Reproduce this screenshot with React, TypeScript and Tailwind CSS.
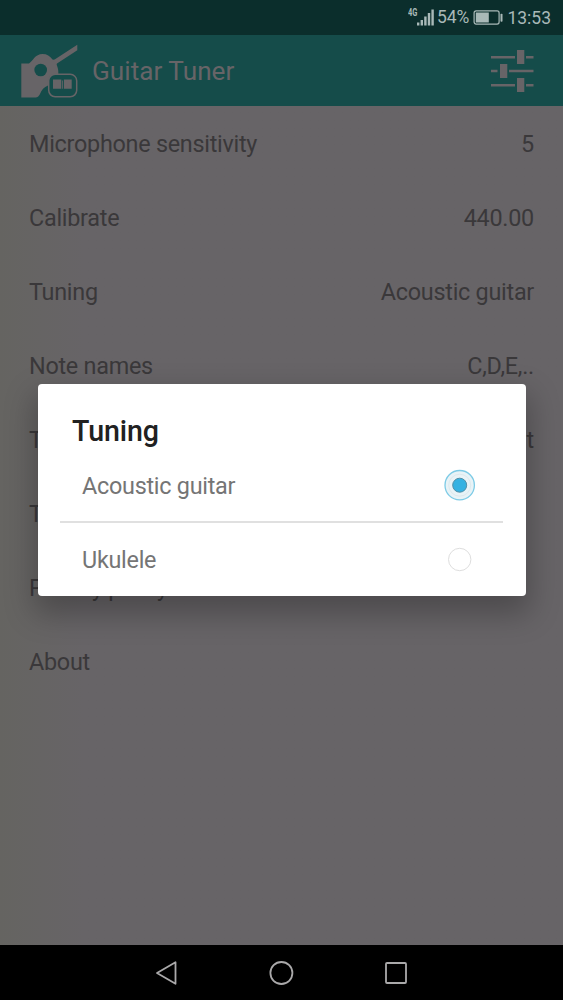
interface Setting {
  label: string
  value?: string
}

const SETTINGS: Setting[] = [
  { label: 'Microphone sensitivity', value: '5' },
  { label: 'Calibrate', value: '440.00' },
  { label: 'Tuning', value: 'Acoustic guitar' },
  { label: 'Note names', value: 'C,D,E,..' },
  { label: 'Theme', value: 'Light' },
  { label: 'Tutorial' },
  { label: 'Privacy policy' },
  { label: 'About' },
]

function StatusBar() {
  return (
    <div className="flex h-[35px] shrink-0 items-center justify-end bg-[#0b2e2c] pr-3 text-[#a9b9b8]">
      <span className="mb-[9px] w-[9px] origin-left scale-x-75 text-[10px] leading-none font-bold">4G</span>
      <svg className="mb-px" width="17" height="17" viewBox="0 0 17 17" fill="currentColor">
        <rect x="0" y="13.500" width="2.400" height="3" />
        <rect x="3.600" y="11" width="2.400" height="5.500" />
        <rect x="7.200" y="7.500" width="2.400" height="9" />
        <rect x="10.800" y="4" width="2.400" height="12.500" />
        <rect x="14.400" y="0.500" width="2.400" height="16" />
      </svg>
      <span className="ml-[3px] text-[17.5px] leading-none">54%</span>
      <svg className="ml-[4px]" width="30" height="16" viewBox="0 0 30 16" fill="none">
        <rect x="1.100" y="0.900" width="25" height="13.200" rx="2" stroke="currentColor" strokeWidth="1.200" />
        <rect x="2.800" y="2.500" width="13" height="10" fill="currentColor" />
        <rect x="27.500" y="3.800" width="2" height="8" rx="0.8" fill="currentColor" />
      </svg>
      <span className="mt-[2px] ml-[4px] text-[17.5px] leading-none">13:53</span>
    </div>
  )
}

function GuitarLogo() {
  return (
    <svg width="58" height="54" viewBox="0 0 58 54" fill="none">
      <path
        d="M0.300 19.500H8C12 17 14 10 21.500 10C26 10 29 12 31.500 15.500Q33 16 34.800 14.800L56.300 0.800V6.200L36 19.600C35 20.500 36.500 22 37 25C37.500 27.500 37.300 29 37.300 31H32C29 34 28.500 37 27 41.500C23 43 20.500 46 19 50C17.500 53 16 53.500 13 53.500H0.300Z"
        fill="#676467"
      />
      <circle cx="19.700" cy="26" r="6.300" fill="#154c4a" />
      <rect x="27.700" y="30.300" width="28" height="22.500" rx="6.500" fill="#154c4a" stroke="#676467" strokeWidth="1.500" />
      <path d="M32 35.500H40.300V44.800H32ZM42.900 35.500H50.700V44.800H42.900ZM41.200 36.500H42V44.800H41.200Z" fill="#676467" />
    </svg>
  )
}

function SlidersIcon() {
  return (
    <svg width="43" height="43" viewBox="0 0 43 43" fill="#676467">
      <path d="M0 6H24V8.500H0ZM35 6H42.500V8.500H35ZM0 19.700H6.500V22.200H0ZM18 19.700H42.500V22.200H18ZM0 34H24V36.500H0ZM35 34H42.500V36.500H35Z" />
      <rect x="26" y="0" width="7.300" height="14" />
      <rect x="9" y="14" width="7.300" height="14" />
      <rect x="26" y="28" width="7.300" height="14" />
    </svg>
  )
}

function TitleBar() {
  return (
    <header className="flex h-[71px] shrink-0 items-center bg-[#154c4a] pt-px pr-[29px] pl-[21px]">
      <GuitarLogo />
      <h1 className="mt-px ml-[13px] flex-1 text-[26.2px] leading-none text-[#676467]">Guitar Tuner</h1>
      <SlidersIcon />
    </header>
  )
}

function NavigationBar() {
  return (
    <nav className="flex h-[55px] shrink-0 items-center justify-center gap-[90px] bg-black pr-px text-[#aaa9aa]">
      <svg width="24" height="26" viewBox="0 0 24 26" fill="none" stroke="currentColor" strokeWidth="1.800" strokeLinejoin="round">
        <path d="M3 13L21.500 2.200V23.800Z" />
      </svg>
      <svg width="26" height="26" viewBox="0 0 26 26" fill="none" stroke="currentColor" strokeWidth="1.800">
        <circle cx="13.400" cy="13" r="11" />
      </svg>
      <svg width="24" height="26" viewBox="0 0 24 26" fill="none" stroke="currentColor" strokeWidth="1.800">
        <rect x="2" y="3" width="20" height="20" rx="1" />
      </svg>
    </nav>
  )
}

function Radio({ checked }: { checked: boolean }) {
  return (
    <svg width="32" height="32" viewBox="0 0 32 32" fill="none">
      {checked ? (
        <>
          <circle cx="15.700" cy="16.200" r="14.700" fill="#e8f3f7" stroke="#7dcbe6" strokeWidth="1.300" />
          <circle cx="15.700" cy="16.200" r="11" stroke="#dde9ed" />
          <circle cx="15.700" cy="16.200" r="7" fill="#35b2e2" stroke="#528fa6" strokeWidth="1" />
        </>
      ) : (
        <circle cx="15.700" cy="15.500" r="11.200" stroke="#dedede" />
      )}
    </svg>
  )
}

function TuningDialog() {
  return (
    <div
      role="dialog"
      className="absolute top-[384px] left-[37.5px] h-[211.5px] w-[488px] rounded-[4px] bg-white px-[22.5px] tracking-[-0.27px] shadow-[0_14px_30px_4px_rgba(0,0,0,0.26)]"
    >
      <h2 className="pt-[33px] pl-[12px] text-[28.6px] leading-[28px] font-medium tracking-[-0.1px] text-[#212121]">Tuning</h2>
      <div className="mt-[4px] flex h-[74px] items-center justify-between border-b-2 border-[#e0e0e0] pr-[27px] pl-[22px] text-[#757575]">
        <span className="mt-[3px]">Acoustic guitar</span>
        <Radio checked />
      </div>
      <div className="flex h-[73px] items-center justify-between pr-[27px] pl-[22px] text-[#757575]">
        <span className="mt-[2px]">Ukulele</span>
        <Radio checked={false} />
      </div>
    </div>
  )
}

export default function App() {
  return (
    <div className="relative flex h-[1000px] w-[563px] flex-col overflow-hidden bg-[#676467] font-['Roboto',sans-serif] text-[23.4px]">
      <StatusBar />
      <TitleBar />
      <main className="flex-1 bg-linear-to-r from-[#656461] via-[#676467] via-15% to-[#676467] pt-0.5 tracking-[-0.27px] text-[#3a383a]">
        {SETTINGS.map(setting => (
          <div key={setting.label} className="flex h-[74px] items-center justify-between px-[29px]">
            <span>{setting.label}</span>
            {setting.value && <span>{setting.value}</span>}
          </div>
        ))}
      </main>
      <NavigationBar />
      <TuningDialog />
    </div>
  )
}
